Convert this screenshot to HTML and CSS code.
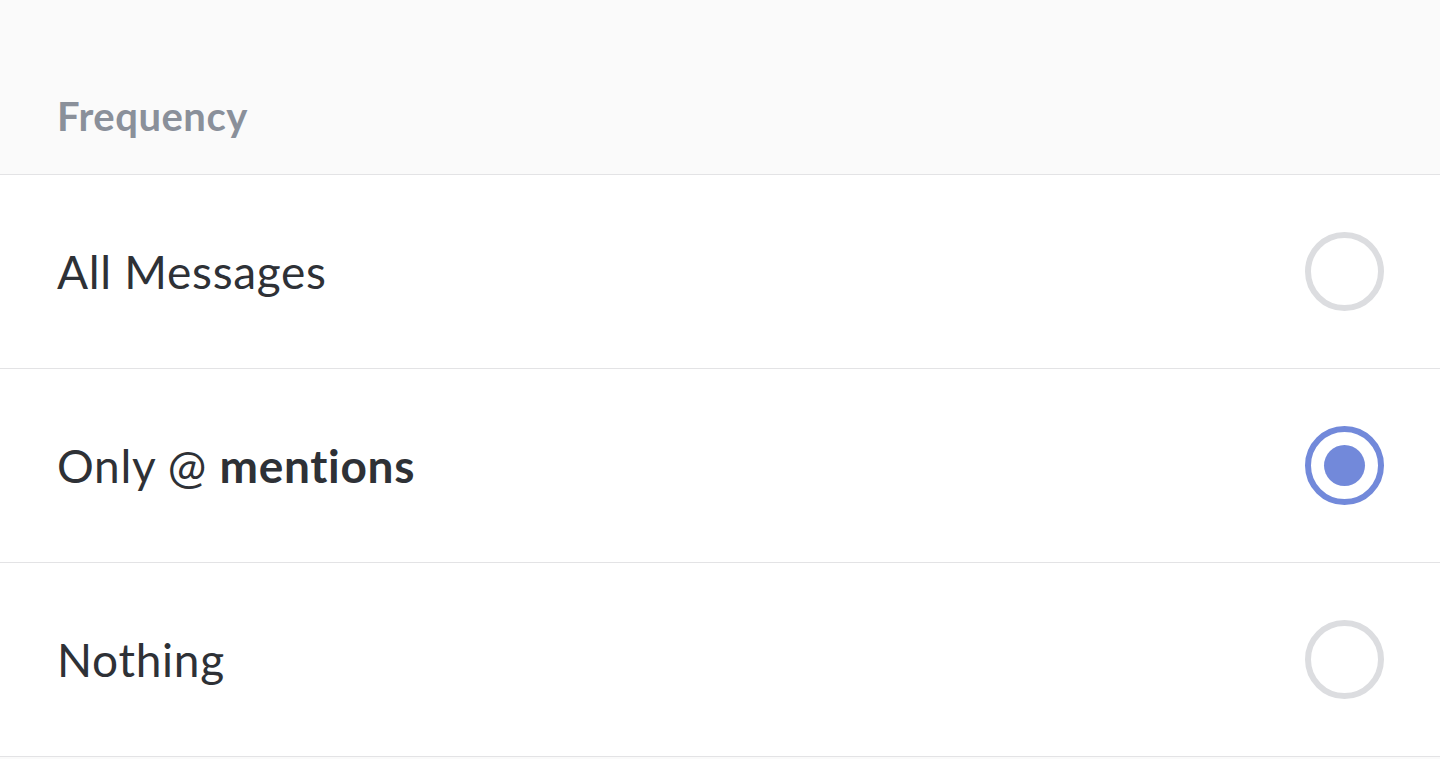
FILE: index.html
```html
<!DOCTYPE html>
<html lang="en">
<head>
    <meta charset="UTF-8">
    <meta name="viewport" content="width=device-width, initial-scale=1.0">
    <title>Notification Frequency</title>
    <link rel="stylesheet" href="styles.css">
</head>
<body>
    <div class="section-header">Frequency</div>
    <div class="options">
        <label class="option">
            <span class="option-label">All Messages</span>
            <input type="radio" name="frequency" value="all">
            <span class="radio"></span>
        </label>
        <label class="option">
            <span class="option-label">Only @ <strong>mentions</strong></span>
            <input type="radio" name="frequency" value="mentions" checked>
            <span class="radio"></span>
        </label>
        <label class="option">
            <span class="option-label">Nothing</span>
            <input type="radio" name="frequency" value="nothing">
            <span class="radio"></span>
        </label>
    </div>
</body>
</html>
```

FILE: styles.css
```css
body {
    font-family: 'Lato', 'Noto Sans', sans-serif;
    margin: 0;
    background-color: #fafafa;
    color: #2e3136;
}

.section-header {
    box-sizing: border-box;
    height: 175px;
    padding: 58px 57px 0;
    display: flex;
    align-items: center;
    font-size: 40px;
    font-weight: 700;
    letter-spacing: 0.5px;
    color: #8a909a;
    border-bottom: 1px solid #e3e3e5;
}

.options {
    background-color: #ffffff;
}

.option {
    box-sizing: border-box;
    height: 194px;
    padding: 0 56px 0 57px;
    display: flex;
    align-items: center;
    justify-content: space-between;
    border-bottom: 1px solid #e3e3e5;
    cursor: pointer;
}

.option-label {
    font-size: 46px;
    font-weight: 400;
    letter-spacing: 0.7px;
}

.option-label strong {
    font-weight: 700;
}

.option input {
    display: none;
}

.radio {
    box-sizing: border-box;
    width: 79px;
    height: 79px;
    border: 6px solid #dcdde0;
    border-radius: 50%;
    display: flex;
    align-items: center;
    justify-content: center;
}

.option input:checked + .radio {
    border-color: #7289da;
}

.option input:checked + .radio::after {
    content: '';
    width: 41px;
    height: 41px;
    border-radius: 50%;
    background-color: #7289da;
}
```
